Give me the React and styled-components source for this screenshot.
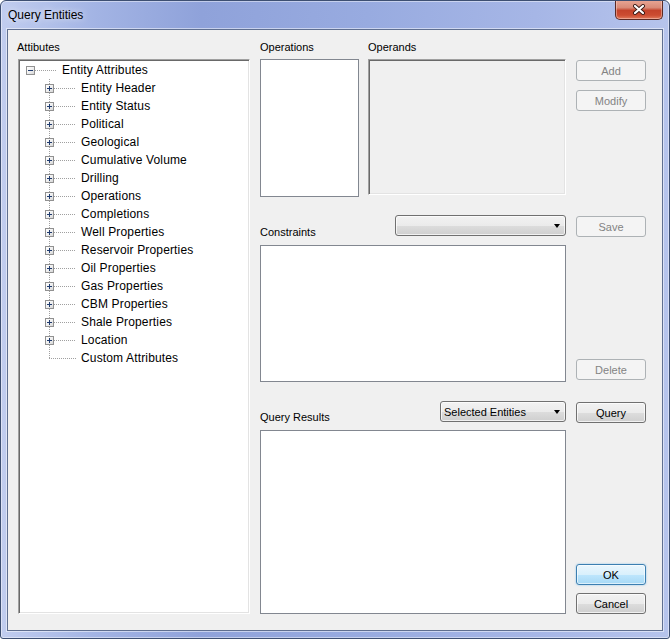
import styled, { createGlobalStyle, css } from 'styled-components'

const Global = createGlobalStyle`
  html, body { margin: 0; padding: 0; background: #fff; }
  * { box-sizing: border-box; }
`

const Window = styled.div`
  width: 670px;
  height: 639px;
  display: flex;
  flex-direction: column;
  border: 1px solid #3d4f72;
  border-radius: 6px 6px 3px 3px;
  background: linear-gradient(90deg, #c1cdef 0%, #a3b4e4 14%, #8fa2da 30%, #98abe0 55%, #a6b6e6 80%, #b6c4ec 100%);
  box-shadow: inset 0 0 0 1px rgba(255, 255, 255, 0.45);
  font-family: "Liberation Sans", Arial, sans-serif;
  overflow: hidden;
`

const TitleBar = styled.div`
  height: 28px;
  flex: none;
  display: flex;
  align-items: flex-start;
  justify-content: space-between;
  padding: 0 6px 0 7px;
`

const Title = styled.div`
  font-size: 12px;
  line-height: 28px;
  color: #000;
  text-shadow: 0 0 6px rgba(255, 255, 255, 0.9);
`

const CloseButton = styled.div`
  width: 48px;
  height: 20px;
  margin-top: -1px;
  display: flex;
  align-items: center;
  justify-content: center;
  border: 1px solid #5b2a24;
  border-top: none;
  border-radius: 0 0 5px 5px;
  background: linear-gradient(180deg, #e9a796 0%, #d98a77 40%, #c4432b 55%, #cc4c31 80%, #e07a5c 100%);
  box-shadow: inset 0 0 0 1px rgba(255, 220, 210, 0.45);
`

const Client = styled.div`
  flex: 1;
  margin: 0 6px 7px;
  display: flex;
  gap: 10px;
  padding: 10px 16px 16px 10px;
  background: #f0f0f0;
  border: 1px solid #5f6f90;
  box-shadow: 0 0 0 1px rgba(255, 255, 255, 0.5);
`

const LeftColumn = styled.div`
  width: 232px;
  display: flex;
  flex-direction: column;
`

const Label = styled.div`
  font-size: 11px;
  line-height: 14px;
  color: #000;
  white-space: nowrap;
  margin-left: ${p => p.$shift || 0}px;
`

const sunken = css`
  border: 1px solid;
  border-color: #a0a0a0 #ffffff #ffffff #a0a0a0;
  box-shadow: inset 1px 1px 0 #696969, inset -1px -1px 0 #e3e3e3;
`

const TreeBox = styled.div`
  flex: 1;
  margin-top: 5px;
  background: #fff;
  padding-top: 1px;
  ${sunken}
`

const Row = styled.div`
  height: 18px;
  display: flex;
  align-items: center;
  padding-left: ${p => 7 + p.$depth * 19}px;
  font-size: 12px;
  letter-spacing: 0.15px;
  color: #000;
  white-space: nowrap;
`

const Expander = styled.span`
  position: relative;
  z-index: 1;
  width: 9px;
  height: 9px;
  flex: none;
  border: 1px solid #919191;
  background: linear-gradient(135deg, #ffffff 0%, #f0f0f0 50%, #d6d6d6 100%);
  &::before {
    content: '';
    position: absolute;
    left: 1px;
    top: 3px;
    width: 5px;
    height: 1px;
    background: #1e3a6e;
  }
  ${p => !p.$open && css`
    &::after {
      content: '';
      position: absolute;
      left: 3px;
      top: 1px;
      width: 1px;
      height: 5px;
      background: #1e3a6e;
    }
  `}
`

const Connector = styled.span`
  flex: none;
  width: ${p => (p.$leaf ? 27 : 22)}px;
  margin-left: ${p => (p.$leaf ? 4 : 0)}px;
  margin-right: 5px;
  height: 1px;
  background: repeating-linear-gradient(90deg, #a0a0a0 0 1px, transparent 1px 2px);
`

const Children = styled.div`
  position: relative;
  &::before {
    content: '';
    position: absolute;
    left: 30px;
    top: 0;
    bottom: 9px;
    width: 1px;
    background: repeating-linear-gradient(180deg, #a0a0a0 0 1px, transparent 1px 2px);
  }
`

const RightGrid = styled.div`
  display: grid;
  grid-template-columns: 99px 9px 198px 10px 70px;
  grid-template-rows: 19px 138px 18px 24px 6px 137px 19px 23px 6px 184px;
  grid-template-areas:
    "opl . ndl . ."
    "opb . ndb . top"
    ". . . . ."
    "chd chd chd . save"
    ". . . . ."
    "cbx cbx cbx . del"
    ". . . . ."
    "qhd qhd qhd . qry"
    ". . . . ."
    "rbx rbx rbx . fin";
`

const Cell = styled.div`
  grid-area: ${p => p.$area};
  min-width: 0;
`

const ListBox = styled.div`
  grid-area: ${p => p.$area};
  background: #fff;
  border: 1px solid #828790;
`

const OperandsBox = styled.div`
  grid-area: ndb;
  height: 136px;
  background: #f0f0f0;
  ${sunken}
`

const Header = styled.div`
  grid-area: ${p => p.$area};
  display: flex;
  justify-content: space-between;
  align-items: flex-end;
`

const ButtonStack = styled.div`
  grid-area: ${p => p.$area};
  display: flex;
  flex-direction: column;
  justify-content: ${p => p.$justify || 'flex-start'};
  gap: ${p => p.$gap || 0}px;
  padding-top: ${p => p.$top || 0}px;
  padding-bottom: ${p => p.$bottom || 0}px;
`

const Button = styled.div`
  width: 70px;
  height: 21px;
  flex: none;
  display: flex;
  align-items: center;
  justify-content: center;
  font-size: 11px;
  border-radius: 3px;
  ${p => p.$variant === 'disabled' && css`
    color: #838383;
    border: 1px solid #adb2b5;
    background: #f4f4f4;
  `}
  ${p => p.$variant === 'normal' && css`
    color: #000;
    border: 1px solid #707070;
    background: linear-gradient(180deg, #f2f2f2 0%, #ebebeb 50%, #dddddd 51%, #cfcfcf 100%);
    box-shadow: inset 0 0 0 1px rgba(255, 255, 255, 0.7);
  `}
  ${p => p.$variant === 'default' && css`
    color: #000;
    border: 1px solid #3c7fb1;
    background: linear-gradient(180deg, #eaf6fd 0%, #d9f0fc 50%, #bee6fd 51%, #a7d9f5 100%);
    box-shadow: inset 0 0 0 1px rgba(255, 255, 255, 0.6), 0 0 2px rgba(60, 160, 230, 0.6);
  `}
`

const Combo = styled.div`
  width: ${p => p.$width}px;
  height: 21px;
  align-self: flex-start;
  display: flex;
  align-items: center;
  justify-content: space-between;
  padding: 0 5px 0 3px;
  font-size: 11px;
  color: #000;
  border: 1px solid #707070;
  border-radius: 3px;
  background: linear-gradient(180deg, #f2f2f2 0%, #ebebeb 50%, #dddddd 51%, #cfcfcf 100%);
  box-shadow: inset 0 0 0 1px rgba(255, 255, 255, 0.7);
`

const Arrow = styled.span`
  width: 0;
  height: 0;
  border-left: 3.5px solid transparent;
  border-right: 3.5px solid transparent;
  border-top: 4px solid #000;
`

const categories = [
  'Entity Header', 'Entity Status', 'Political', 'Geological', 'Cumulative Volume',
  'Drilling', 'Operations', 'Completions', 'Well Properties', 'Reservoir Properties',
  'Oil Properties', 'Gas Properties', 'CBM Properties', 'Shale Properties', 'Location',
]

function CloseGlyph() {
  return (
    <svg width="14" height="11" viewBox="0 0 14 11">
      <path d="M3 2 L11 9 M11 2 L3 9" stroke="#3a1a16" strokeWidth="4" strokeLinecap="round" />
      <path d="M3 2 L11 9 M11 2 L3 9" stroke="#ffffff" strokeWidth="2.2" strokeLinecap="round" />
    </svg>
  )
}

export default function App() {
  return (
    <>
      <Global />
      <Window>
        <TitleBar>
          <Title>Query Entities</Title>
          <CloseButton><CloseGlyph /></CloseButton>
        </TitleBar>
        <Client>
          <LeftColumn>
            <Label $shift={-1}>Attibutes</Label>
            <TreeBox>
              <Row $depth={0}>
                <Expander $open />
                <Connector />
                Entity Attributes
              </Row>
              <Children>
                {categories.map(name => (
                  <Row key={name} $depth={1}>
                    <Expander />
                    <Connector />
                    {name}
                  </Row>
                ))}
                <Row $depth={1}>
                  <Connector $leaf />
                  Custom Attributes
                </Row>
              </Children>
            </TreeBox>
          </LeftColumn>

          <RightGrid>
            <Cell $area="opl"><Label>Operations</Label></Cell>
            <Cell $area="ndl"><Label>Operands</Label></Cell>
            <ListBox $area="opb" />
            <OperandsBox />
            <ButtonStack $area="top" $gap={9} $top={1}>
              <Button $variant="disabled">Add</Button>
              <Button $variant="disabled">Modify</Button>
            </ButtonStack>

            <Header $area="chd">
              <Label>Constraints</Label>
              <Combo $width={171}><span /><Arrow /></Combo>
            </Header>
            <ButtonStack $area="save" $top={1}>
              <Button $variant="disabled">Save</Button>
            </ButtonStack>
            <ListBox $area="cbx" />
            <ButtonStack $area="del" $justify="flex-end" $bottom={2}>
              <Button $variant="disabled">Delete</Button>
            </ButtonStack>

            <Header $area="qhd">
              <Label>Query Results</Label>
              <Combo $width={126}><span>Selected Entities</span><Arrow /></Combo>
            </Header>
            <ButtonStack $area="qry" $top={1}>
              <Button $variant="normal">Query</Button>
            </ButtonStack>
            <ListBox $area="rbx" />
            <ButtonStack $area="fin" $justify="flex-end" $gap={8}>
              <Button $variant="default">OK</Button>
              <Button $variant="normal">Cancel</Button>
            </ButtonStack>
          </RightGrid>
        </Client>
      </Window>
    </>
  )
}
